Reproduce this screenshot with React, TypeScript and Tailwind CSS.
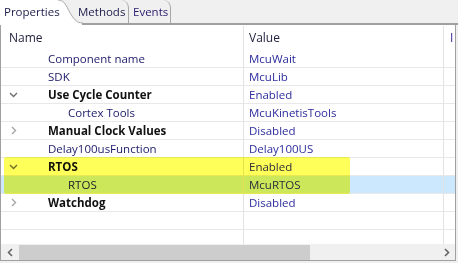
import React from "react";

type Row = {
  name?: string;
  value?: string;
  level?: 1 | 2;
  bold?: boolean;
  chevron?: "down" | "right";
  selected?: boolean;
};

const rows: Row[] = [
  { name: "Component name", value: "McuWait", level: 1 },
  { name: "SDK", value: "McuLib", level: 1 },
  { name: "Use Cycle Counter", value: "Enabled", level: 1, bold: true, chevron: "down" },
  { name: "Cortex Tools", value: "McuKinetisTools", level: 2 },
  { name: "Manual Clock Values", value: "Disabled", level: 1, bold: true, chevron: "right" },
  { name: "Delay100usFunction", value: "Delay100US", level: 1 },
  { name: "RTOS", value: "Enabled", level: 1, bold: true, chevron: "down" },
  { name: "RTOS", value: "McuRTOS", level: 2, selected: true },
  { name: "Watchdog", value: "Disabled", level: 1, bold: true, chevron: "right" },
  {},
  {},
];

const Chevron = ({ dir }: { dir: "down" | "right" }) =>
  dir === "down" ? (
    <svg width="9" height="6" viewBox="0 0 9 6">
      <path d="M1 1 L4.5 4.5 L8 1" fill="none" stroke="#6e6e6e" strokeWidth="1.4" />
    </svg>
  ) : (
    <svg width="6" height="9" viewBox="0 0 6 9">
      <path d="M1 1 L4.5 4.5 L1 8" fill="none" stroke="#a6a6a6" strokeWidth="1.4" />
    </svg>
  );

const TableRow = ({ row }: { row: Row }) => (
  <div
    className={`flex h-[18px] shrink-0 border-b border-[#e8e8e8] ${
      row.selected ? "bg-[#cce8ff]" : ""
    }`}
  >
    <div className="flex w-[242px] items-center">
      <div
        className={`flex h-full items-center pl-[8px] ${
          row.level === 2 ? "w-[67px]" : "w-[47px]"
        }`}
      >
        {row.chevron && (
          <div className="flex w-[9px] justify-center">
            <Chevron dir={row.chevron} />
          </div>
        )}
      </div>
      <span className={row.bold ? "font-bold text-[#111111]" : "text-[#1b1b69]"}>
        {row.name}
      </span>
    </div>
    <div className="flex w-[200px] items-center border-l border-[#e3e3e3] pl-[5px] text-[#2c2c9e]">
      {row.value}
    </div>
    <div className="flex-1 border-l border-[#e3e3e3]" />
  </div>
);

export default function App() {
  return (
    <div
      className="relative h-[263px] w-[458px] overflow-hidden bg-[#f0f0f0] text-[11.5px] leading-none"
      style={{ fontFamily: '"Open Sans", "Noto Sans", sans-serif' }}
    >
      {/* tab strip */}
      <div className="flex h-[25px]">
        <div className="relative z-10 flex w-[54px] items-center whitespace-nowrap bg-white pb-[2px] pl-[4px] text-[#1b1b4a]">
          Properties
        </div>
        <svg width="29" height="25" viewBox="0 0 29 25" className="shrink-0">
          <path d="M0 0 H4 C12 0 13 9 18 16 C22 22 25 23 29 23 V25 H0 Z" fill="#ffffff" />
          <path d="M4 0 C12 0 13 9 18 16 C22 22 25 23 29 23" fill="none" stroke="#a8a8a8" strokeWidth="1" />
          <rect x="28" y="23" width="1" height="2" fill="#a0a0a0" />
        </svg>
        <div className="flex flex-1 items-stretch border-b-2 border-[#a0a0a0]">
          <div className="-ml-[6px] flex w-[52px] items-center rounded-tr-[8px] border-r border-[#a8a8a8] pl-[1px] text-[#1b1b4a]">
            Methods
          </div>
          <div className="flex w-[42px] items-center rounded-tr-[8px] border-r border-[#a8a8a8] pl-[4px] text-[#2a1a6e]">
            Events
          </div>
        </div>
      </div>

      {/* table */}
      <div className="flex w-[456px] flex-col border-b border-l border-r border-[#a0a0a0] bg-white">
        <div className="flex h-[219px] flex-col overflow-hidden">
          <div className="flex h-[25px] shrink-0">
            <div className="flex w-[242px] items-center pl-[8px] text-[12px] text-[#1e1e3c]">
              Name
            </div>
            <div className="mt-[1px] flex w-[200px] items-center border-l border-[#e3e3e3] pl-[5px] text-[12px] text-[#1e1e3c]">
              Value
            </div>
            <div className="mt-[1px] flex flex-1 items-center overflow-hidden whitespace-nowrap border-l border-[#e3e3e3] pl-[6px] text-[12px] text-[#3a2a9e]">
              I
            </div>
          </div>
          {rows.map((r, i) => (
            <TableRow key={i} row={r} />
          ))}
        </div>

        {/* horizontal scrollbar */}
        <div className="flex h-[16px] items-center bg-[#f0f0f0]">
          <div className="flex w-[18px] justify-center">
            <svg width="6" height="9" viewBox="0 0 6 9">
              <path d="M5 1 L1.5 4.5 L5 8" fill="none" stroke="#606060" strokeWidth="1.5" />
            </svg>
          </div>
          <div className="h-[15px] w-[291px] bg-[#cdcdcd]" />
          <div className="flex-1" />
          <div className="flex w-[16px] justify-center">
            <svg width="6" height="9" viewBox="0 0 6 9">
              <path d="M1 1 L4.5 4.5 L1 8" fill="none" stroke="#606060" strokeWidth="1.5" />
            </svg>
          </div>
        </div>
      </div>

      {/* highlighter marker over RTOS rows */}
      <div className="pointer-events-none absolute left-[4px] top-[157px] h-[37px] w-[346px] rounded-[2px] bg-[#ffff5a] mix-blend-multiply" />
    </div>
  );
}
